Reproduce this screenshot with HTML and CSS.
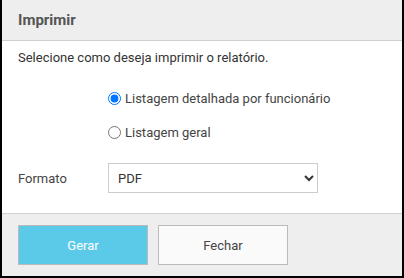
FILE: index.html
```html
<!DOCTYPE html>
<html lang="pt">
<head>
    <meta charset="UTF-8">
    <meta name="viewport" content="width=device-width, initial-scale=1.0">
    <title>Imprimir</title>
    <link rel="stylesheet" href="styles.css">
</head>
<body>
    <div class="modal">
        <div class="modal-header">
            <h2>Imprimir</h2>
        </div>
        <div class="modal-body">
            <p class="intro">Selecione como deseja imprimir o relatório.</p>
            <div class="options">
                <label class="option">
                    <input type="radio" name="tipo" checked>
                    <span>Listagem detalhada por funcionário</span>
                </label>
                <label class="option">
                    <input type="radio" name="tipo">
                    <span>Listagem geral</span>
                </label>
            </div>
            <div class="field">
                <label for="formato">Formato</label>
                <select id="formato">
                    <option>PDF</option>
                    <option>Excel</option>
                </select>
            </div>
        </div>
        <div class="modal-footer">
            <button class="btn btn-primary">Gerar</button>
            <button class="btn">Fechar</button>
        </div>
    </div>
</body>
</html>
```

FILE: styles.css
```css
body {
    margin: 0;
    padding: 0;
    font-family: Roboto, "Liberation Sans", Arial, sans-serif;
    font-size: 13px;
    color: #333;
    background-color: #fff;
}

.modal {
    height: 278px;
    box-sizing: border-box;
    border: 2px solid #000;
    border-top: none;
    display: flex;
    flex-direction: column;
}

.modal-header {
    height: 40px;
    background-color: #eeeeee;
    border-bottom: 1px solid #cfcfcf;
    display: flex;
    align-items: center;
    padding-left: 16px;
}

.modal-header h2 {
    margin: 0;
    font-size: 15px;
    font-weight: bold;
    color: #555;
}

.modal-body {
    height: 172px;
    padding: 0 16px;
    background-color: #fff;
}

.intro {
    margin: 7px 0 0;
    line-height: 20px;
}

.options {
    margin-top: 20px;
    padding-left: 90px;
    display: flex;
    flex-direction: column;
    gap: 14px;
}

.option {
    display: flex;
    align-items: center;
    height: 20px;
    color: #444;
}

.option input {
    margin: 0 4px 0 0;
    width: 13px;
    height: 13px;
}

.field {
    margin-top: 21px;
    display: flex;
    align-items: center;
}

.field label {
    width: 90px;
    color: #444;
}

.field select {
    width: 210px;
    height: 30px;
    border: 1px solid #cccccc;
    border-radius: 0;
    background-color: #fff;
    padding: 0 5px;
    font-family: inherit;
    font-size: 13px;
    color: #333;
}

.modal-footer {
    flex: 1;
    background-color: #eeeeee;
    border-top: 1px solid #cfcfcf;
    padding: 11px 16px 0;
    display: flex;
    align-items: flex-start;
    gap: 10px;
}

.btn {
    width: 130px;
    height: 40px;
    border: 1px solid #bbbbbb;
    background-color: #fafafa;
    font-family: inherit;
    font-size: 13px;
    color: #444;
    cursor: pointer;
}

.btn-primary {
    background-color: #5bcae8;
    color: #fff;
}
```
